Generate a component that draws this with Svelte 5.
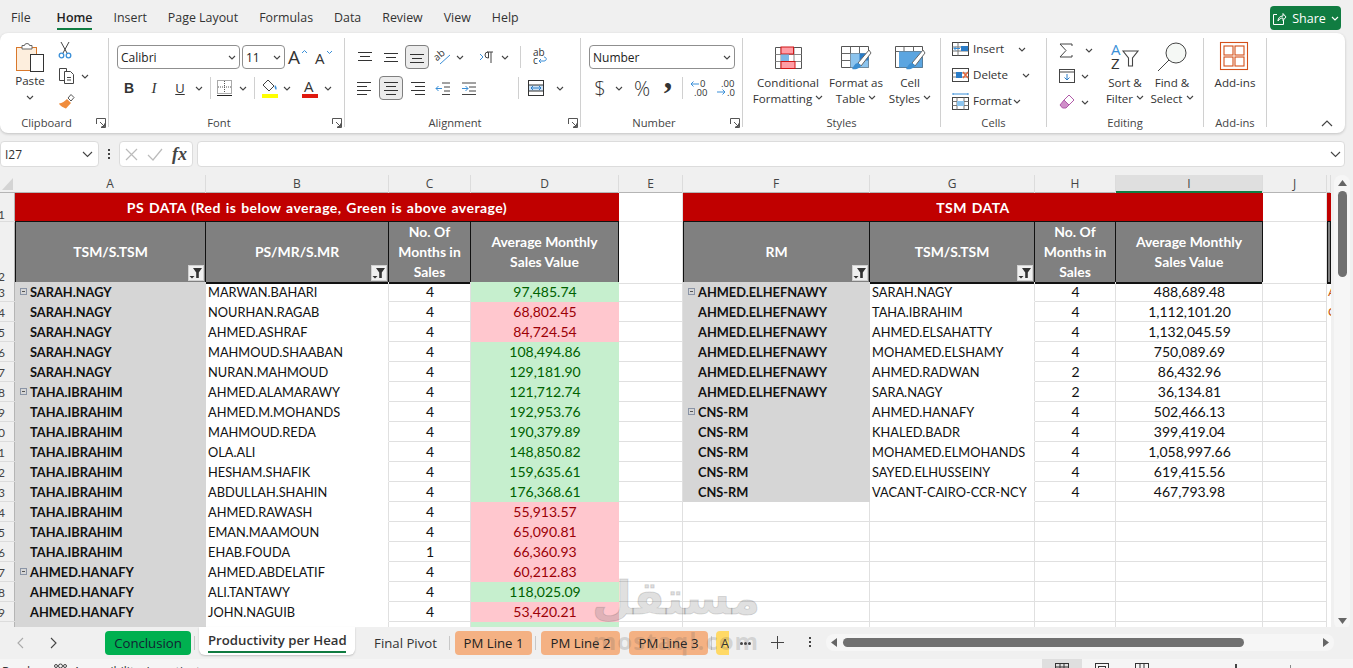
<script lang="ts">
  const MENU = ['File', 'Home', 'Insert', 'Page Layout', 'Formulas', 'Data', 'Review', 'View', 'Help']

  const COLS = ['A', 'B', 'C', 'D', 'E', 'F', 'G', 'H', 'I', 'J']

  // TSM, first in group, PS, months, value, above average
  const PS = [
    ['SARAH.NAGY', 1, 'MARWAN.BAHARI', 4, '97,485.74', 1],
    ['SARAH.NAGY', 0, 'NOURHAN.RAGAB', 4, '68,802.45', 0],
    ['SARAH.NAGY', 0, 'AHMED.ASHRAF', 4, '84,724.54', 0],
    ['SARAH.NAGY', 0, 'MAHMOUD.SHAABAN', 4, '108,494.86', 1],
    ['SARAH.NAGY', 0, 'NURAN.MAHMOUD', 4, '129,181.90', 1],
    ['TAHA.IBRAHIM', 1, 'AHMED.ALAMARAWY', 4, '121,712.74', 1],
    ['TAHA.IBRAHIM', 0, 'AHMED.M.MOHANDS', 4, '192,953.76', 1],
    ['TAHA.IBRAHIM', 0, 'MAHMOUD.REDA', 4, '190,379.89', 1],
    ['TAHA.IBRAHIM', 0, 'OLA.ALI', 4, '148,850.82', 1],
    ['TAHA.IBRAHIM', 0, 'HESHAM.SHAFIK', 4, '159,635.61', 1],
    ['TAHA.IBRAHIM', 0, 'ABDULLAH.SHAHIN', 4, '176,368.61', 1],
    ['TAHA.IBRAHIM', 0, 'AHMED.RAWASH', 4, '55,913.57', 0],
    ['TAHA.IBRAHIM', 0, 'EMAN.MAAMOUN', 4, '65,090.81', 0],
    ['TAHA.IBRAHIM', 0, 'EHAB.FOUDA', 1, '66,360.93', 0],
    ['AHMED.HANAFY', 1, 'AHMED.ABDELATIF', 4, '60,212.83', 0],
    ['AHMED.HANAFY', 0, 'ALI.TANTAWY', 4, '118,025.09', 1],
    ['AHMED.HANAFY', 0, 'JOHN.NAGUIB', 4, '53,420.21', 0],
    ['AHMED.HANAFY', 0, '', '', '', 1],
  ]

  const TSM = [
    ['AHMED.ELHEFNAWY', 1, 'SARAH.NAGY', 4, '488,689.48'],
    ['AHMED.ELHEFNAWY', 0, 'TAHA.IBRAHIM', 4, '1,112,101.20'],
    ['AHMED.ELHEFNAWY', 0, 'AHMED.ELSAHATTY', 4, '1,132,045.59'],
    ['AHMED.ELHEFNAWY', 0, 'MOHAMED.ELSHAMY', 4, '750,089.69'],
    ['AHMED.ELHEFNAWY', 0, 'AHMED.RADWAN', 2, '86,432.96'],
    ['AHMED.ELHEFNAWY', 0, 'SARA.NAGY', 2, '36,134.81'],
    ['CNS-RM', 1, 'AHMED.HANAFY', 4, '502,466.13'],
    ['CNS-RM', 0, 'KHALED.BADR', 4, '399,419.04'],
    ['CNS-RM', 0, 'MOHAMED.ELMOHANDS', 4, '1,058,997.66'],
    ['CNS-RM', 0, 'SAYED.ELHUSSEINY', 4, '619,415.56'],
    ['CNS-RM', 0, 'VACANT-CAIRO-CCR-NCY', 4, '467,793.98'],
  ]
</script>

{#snippet chev()}
  <svg class="chev" width="8" height="5" viewBox="0 0 8 5" fill="none" stroke="#444" stroke-width="1.1"><path d="M1 1l3 3 3-3"/></svg>
{/snippet}

{#snippet launcher()}
  <svg class="launcher" width="10" height="10" viewBox="0 0 10 10" fill="none" stroke="#555"><path d="M.5 6V.5h9v9H5M4 4l4.5 4.5M8.5 5.5v3h-3"/></svg>
{/snippet}

{#snippet filter()}
  <span class="filter">
    <svg width="14" height="14" viewBox="0 0 14 14"><path d="M4 2h9L9.8 6.5V12H7.2V6.5z" fill="#333"/><path d="M.5 10h5L3 12.5z" fill="#333"/></svg>
  </span>
{/snippet}

{#snippet lines(kind)}
  <svg width="18" height="14" viewBox="0 0 18 14" stroke="#333" stroke-width="1">
    {#if kind === 'left'}<path d="M1 1.500h14M1 5.500h10M1 9.500h14M1 13.500h10"/>
    {:else if kind === 'center'}<path d="M2 1.500h14M4 5.500h10M2 9.500h14M4 13.500h10"/>
    {:else}<path d="M3 1.500h14M7 5.500h10M3 9.500h14M7 13.500h10"/>{/if}
  </svg>
{/snippet}

<div class="app">
  <header class="titlebar">
    <nav class="menu">
      {#each MENU as m}
        <span class="menu-item {m === 'Home' ? 'current' : ''}">{m}</span>
      {/each}
    </nav>
    <button class="share">
      <svg width="15" height="15" viewBox="0 0 15 15" fill="none" stroke="#fff" stroke-width="1"><path d="M5 3.500H1.500v10h10V9M6 10c0-3 2-5 5-5V2.500L14 6l-3 3.500V7C9 7 7 8 6 10z"/></svg>
      <span>Share</span>
      <svg width="8" height="5" viewBox="0 0 8 5" fill="none" stroke="#fff" stroke-width="1.1"><path d="M1 1l3 3 3-3"/></svg>
    </button>
  </header>

  <section class="ribbon">
    <!-- Clipboard -->
    <div class="group clip ln">
      <div class="body clip-body">
        <div class="paste">
          <svg width="30" height="32" viewBox="0 0 30 32">
            <rect x="1.500" y="6.500" width="20" height="23" fill="#fdeedd" stroke="#d9782b"/>
            <path d="M7 8V4.500h2.500a2.500 2 0 0 1 5 0H17V8z" fill="#fff" stroke="#666"/>
            <rect x="15.500" y="13.500" width="13" height="17" fill="#fff" stroke="#333"/>
          </svg>
          <span class="lbl">Paste</span>
          {@render chev()}
        </div>
        <div class="clip-col">
          <svg width="14" height="18" viewBox="0 0 14 18" fill="none" stroke="#444"><path d="M3 1l6 11M11 1L5 12"/><circle cx="3.500" cy="14.500" r="2.300" stroke="#3a8fd8" stroke-width="1.300"/><circle cx="10.500" cy="14.500" r="2.300" stroke="#3a8fd8" stroke-width="1.300"/></svg>
          <span class="copy">
            <svg width="17" height="18" viewBox="0 0 17 18" fill="none" stroke="#444"><path d="M6 13.500H1.500v-12h7V4"/><path d="M6.500 4.500h6l3 3v9h-9zM9 10.500h4M9 13h4"/></svg>
            {@render chev()}
          </span>
          <svg width="18" height="17" viewBox="0 0 18 17"><path d="M9 6l4 4-5 5.500C6 15 2 13 1 10.500 4 10.500 7 8 9 6z" fill="#f08c3c"/><path d="M10 5l3-3.500 3 3L13 8z" fill="#fff" stroke="#555"/></svg>
        </div>
      </div>
      <span class="g-label">Clipboard</span>
      {@render launcher()}
    </div>

    <!-- Font -->
    <div class="group font ln">
      <div class="row r1">
        <span class="combo w123">Calibri{@render chev()}</span>
        <span class="combo w43">11{@render chev()}</span>
        <span class="ib w26"><svg width="20" height="18" viewBox="0 0 20 18"><text x="0" y="16" class="t-a lg">A</text><path d="M14 5l2.500-2.500L19 5" fill="none" stroke="#3a8fd8"/></svg></span>
        <span class="ib w26"><svg width="18" height="16" viewBox="0 0 18 16"><text x="0" y="15" class="t-a">A</text><path d="M12 2l2.500 2.500L17 2" fill="none" stroke="#3a8fd8"/></svg></span>
      </div>
      <div class="row r2">
        <span class="ib w24 bold">B</span>
        <span class="ib w26 ital">I</span>
        <span class="ib w26 under">U</span>
        <span class="ib w12">{@render chev()}</span>
        <i class="sep s5"></i>
        <span class="ib w20"><svg width="16" height="16" viewBox="0 0 16 16" fill="none" stroke="#555" stroke-dasharray="1 1"><rect x=".5" y=".5" width="14" height="13"/><path d="M7.500 1v12M1 7h13"/><path d="M0 15.500h15" stroke="#222" stroke-dasharray="none"/></svg></span>
        <span class="ib w16">{@render chev()}</span>
        <i class="sep s3"></i>
        <span class="ib w24"><svg width="18" height="19" viewBox="0 0 18 19"><path d="M7 1l6 6-5 5-6-6z" fill="#fff" stroke="#444"/><path d="M14 6c2 2 2 4 1 5-1-1-2-3-1-5z" fill="#3a8fd8"/><rect x="1" y="15" width="16" height="4" fill="#ffff00"/></svg></span>
        <span class="ib w10">{@render chev()}</span>
        <span class="ib w28 ml4"><svg width="18" height="19" viewBox="0 0 18 19"><text x="3" y="13" class="t-a">A</text><rect x="1" y="15" width="16" height="4" fill="#e0190f"/></svg></span>
        <span class="ib w8">{@render chev()}</span>
      </div>
      <span class="g-label">Font</span>
      {@render launcher()}
    </div>

    <!-- Alignment -->
    <div class="group align ln">
      <div class="row r1">
        <span class="ib w26"><svg width="16" height="12" viewBox="0 0 16 12" stroke="#333"><path d="M1 1.500h14M3 5.500h10M1 9.500h14"/></svg></span>
        <span class="ib w26"><svg width="16" height="12" viewBox="0 0 16 12" stroke="#333"><path d="M1 2.500h14M3 6.500h10M1 10.500h14"/></svg></span>
        <span class="ib w24 sel"><svg width="16" height="12" viewBox="0 0 16 12" stroke="#333"><path d="M1 3.500h14M3 7.500h10M1 11.500h14"/></svg></span>
        <span class="ib w26"><svg width="18" height="18" viewBox="0 0 18 18"><text x="0" y="10" class="t-s" transform="rotate(-40 6 8)">ab</text><path d="M6 16l10-9" stroke="#3a8fd8" fill="none"/></svg></span>
        <span class="ib w8">{@render chev()}</span>
        <span class="ib w26 ml10"><svg width="16" height="13" viewBox="0 0 16 13" fill="none"><path d="M1 3l3 3-3 3" stroke="#3a8fd8"/><path d="M8 1h6M12 1v11M9.500 1v6H9a3 3 0 0 1 0-6" stroke="#444"/></svg></span>
        <span class="ib w10">{@render chev()}</span>
        <i class="sep s10"></i>
        <span class="ib w38"><svg width="16" height="16" viewBox="0 0 16 16"><text x="1" y="7" class="t-s">ab</text><text x="1" y="15" class="t-s">c</text><path d="M7 12h5c3 0 3-4 0-4M7 12l2-2M7 12l2 2" fill="none" stroke="#3a8fd8"/></svg></span>
      </div>
      <div class="row r2">
        <span class="ib w26">{@render lines('left')}</span>
        <span class="ib w24 sel">{@render lines('center')}</span>
        <span class="ib w26">{@render lines('right')}</span>
        <span class="ib w26"><svg width="16" height="13" viewBox="0 0 16 13" fill="none"><path d="M7 1h8M9 5h6M9 9h6M7 12.500h8" stroke="#444"/><path d="M7 6.500H1M3.500 4L1 6.500 3.500 9" stroke="#3a8fd8"/></svg></span>
        <span class="ib w26"><svg width="16" height="13" viewBox="0 0 16 13" fill="none"><path d="M1 1h14M8 5h7M8 9h7M1 12.500h14" stroke="#444"/><path d="M1 6.500h6M4.500 4L7 6.500 4.500 9" stroke="#3a8fd8"/></svg></span>
        <i class="sep s36"></i>
        <span class="ib w34"><svg width="16" height="16" viewBox="0 0 16 16" fill="none"><rect x=".5" y=".5" width="15" height="15" stroke="#333"/><rect x="1" y="5" width="14" height="6" fill="#cfe4f7"/><path d="M3 8h10M5 6L3 8l2 2M11 6l2 2-2 2" stroke="#2a7cc7"/><path d="M.5 5h15M.5 11h15" stroke="#333"/></svg></span>
        <span class="ib w14">{@render chev()}</span>
      </div>
      <span class="g-label">Alignment</span>
      {@render launcher()}
    </div>

    <!-- Number -->
    <div class="group number ln">
      <div class="row r1">
        <span class="combo w146">Number{@render chev()}</span>
      </div>
      <div class="row r2">
        <span class="ib w22 sym">$</span>
        <span class="ib w16">{@render chev()}</span>
        <span class="ib w30 sym">%</span>
        <span class="ib w22 comma">,</span>
        <i class="sep s3"></i>
        <span class="ib w28"><svg width="20" height="18" viewBox="0 0 20 18"><text x="10" y="8" class="t-d">0</text><text x="4" y="17" class="t-d">.00</text><path d="M9 5H1M3.500 2.500L1 5l2.500 2.500" fill="none" stroke="#3a8fd8"/></svg></span>
        <span class="ib w24"><svg width="20" height="18" viewBox="0 0 20 18"><text x="5" y="8" class="t-d">.00</text><text x="11" y="17" class="t-d">.0</text><path d="M1 13h8M6.500 10.500L9 13l-2.500 2.500" fill="none" stroke="#3a8fd8"/></svg></span>
      </div>
      <span class="g-label">Number</span>
      {@render launcher()}
    </div>

    <!-- Styles -->
    <div class="group styles">
      <div class="big-row">
        <div class="big w90">
          <svg width="30" height="30" viewBox="0 0 30 30" fill="none">
            <path d="M2.500 5.500h26v21h-26z" stroke="#555"/><path d="M8 5.500v21M21 5.500v21M2.500 12.500h26M2.500 19.500h26" stroke="#888"/>
            <rect x="8" y="5" width="12.500" height="7" fill="#ff9da5" stroke="#d01616"/>
            <rect x="8" y="12.500" width="8" height="7" fill="#7db8e6"/>
            <rect x="8" y="19.500" width="14" height="7" fill="#ff9da5" stroke="#d01616"/>
          </svg>
          <span class="lbl">Conditional</span>
          <span class="lbl">Formatting {@render chev()}</span>
        </div>
        <div class="big w46">
          <svg width="32" height="30" viewBox="0 0 32 30" fill="none">
            <path d="M1.500 4.500h27v21h-27z" stroke="#555"/><path d="M1.500 11.500h27M1.500 18.500h27M10.500 4.500v21M19.500 4.500v21" stroke="#666"/>
            <rect x="10.500" y="11.500" width="18" height="14" fill="#8cc4ee"/><rect x="19.500" y="11.500" width="9" height="7" fill="#2a7cc7"/>
            <path d="M29 8L18 21l3 3L31 11z" fill="#fff" stroke="#666"/><path d="M18 21c-3 0-4 3-6 6 4 1 9-1 9-4z" fill="#3d8fd1"/>
          </svg>
          <span class="lbl">Format as</span>
          <span class="lbl">Table {@render chev()}</span>
        </div>
        <div class="big w62">
          <svg width="32" height="30" viewBox="0 0 32 30" fill="none">
            <path d="M1.500 4.500h27v21h-27z" stroke="#555"/><path d="M1.500 9.500h27M10 4.500v5M19.500 4.500v5" stroke="#666"/>
            <rect x="5" y="9.500" width="23.500" height="16" fill="#5ba5e0"/>
            <path d="M29 8L18 21l3 3L31 11z" fill="#fff" stroke="#666"/><path d="M18 21c-3 0-4 3-6 6 4 1 9-1 9-4z" fill="#3d8fd1"/>
          </svg>
          <span class="lbl">Cell</span>
          <span class="lbl">Styles {@render chev()}</span>
        </div>
      </div>
      <span class="g-label">Styles</span>
    </div>

    <!-- Cells -->
    <div class="group cells">
      <div class="cell-row">
        <svg width="17" height="14" viewBox="0 0 17 14" fill="none"><rect x=".5" y=".5" width="16" height="13" stroke="#444"/><path d="M.5 5h16M.5 9h16M6 .5v13" stroke="#777"/><rect x="9" y="4" width="7" height="5" fill="#2a7cc7"/><path d="M8 6.500H2M4 4.500l-2 2 2 2" stroke="#3a8fd8"/></svg>
        <span class="lbl l45">Insert</span>{@render chev()}
      </div>
      <div class="cell-row">
        <svg width="17" height="14" viewBox="0 0 17 14" fill="none"><rect x=".5" y=".5" width="16" height="13" stroke="#444"/><path d="M.5 5h16M.5 9h16" stroke="#777"/><rect x="4" y="4" width="6" height="6" fill="#2a7cc7"/><path d="M11 4l5 6M16 4l-5 6" stroke="#e8663a" stroke-width="1.300"/></svg>
        <span class="lbl l49">Delete</span>{@render chev()}
      </div>
      <div class="cell-row">
        <svg width="17" height="17" viewBox="0 0 17 17" fill="none"><path d="M1 1h15M1 0v2M16 0v2" stroke="#3a8fd8"/><rect x=".5" y="4.500" width="16" height="12" stroke="#444"/><path d="M.5 8.500h16M.5 12.500h16M5 4.500v12M12 4.500v12" stroke="#777"/><rect x="5" y="8" width="7" height="5" fill="#8cc4ee"/></svg>
        <span class="lbl l40">Format</span>{@render chev()}
      </div>
      <span class="g-label">Cells</span>
    </div>

    <!-- Editing -->
    <div class="group editing">
      <div class="big-row">
        <div class="edit-col">
          <div class="edit-row"><svg width="14" height="15" viewBox="0 0 14 15" fill="none" stroke="#444"><path d="M13 3V1H1l6 6.500L1 14h12v-2"/></svg><span class="gap-sig">{@render chev()}</span></div>
          <div class="edit-row"><svg width="16" height="14" viewBox="0 0 16 14" fill="none"><rect x=".5" y=".5" width="15" height="13" stroke="#444"/><path d="M.5 3h15" stroke="#444"/><path d="M8 5v6M5.500 8.500L8 11l2.500-2.500" stroke="#2a7cc7"/></svg><span class="gap-fill">{@render chev()}</span></div>
          <div class="edit-row"><svg width="16" height="16" viewBox="0 0 16 16"><path d="M10 1l5 5-5 5-5-5z" fill="#fff" stroke="#b05aa8"/><path d="M5 6l5 5-3 3H3.500L1 11z" fill="#cf8fc9" stroke="#b05aa8"/></svg><span class="gap-fill">{@render chev()}</span></div>
        </div>
        <div class="big w46 tall">
          <svg width="30" height="30" viewBox="0 0 30 30" fill="none"><text x="1" y="13" class="t-sort blue">A</text><text x="1" y="27" class="t-sort">Z</text><path d="M13 9h15l-5.500 7v8h-4v-8z" stroke="#444" stroke-width="1.100"/></svg>
          <span class="lbl">Sort &amp;</span>
          <span class="lbl">Filter {@render chev()}</span>
        </div>
        <div class="big w48 tall">
          <svg width="30" height="30" viewBox="0 0 30 30" fill="none" stroke="#444"><circle cx="19" cy="11" r="10" fill="#f5f8f5"/><path d="M12 18L1 29"/></svg>
          <span class="lbl">Find &amp;</span>
          <span class="lbl">Select {@render chev()}</span>
        </div>
      </div>
      <span class="g-label">Editing</span>
    </div>

    <!-- Add-ins -->
    <div class="group addins">
      <div class="big tall">
        <svg width="30" height="30" viewBox="0 0 30 30" fill="none" stroke="#d4501a" stroke-width="1.100"><rect x=".5" y=".5" width="27" height="27"/><rect x="4" y="4" width="9" height="9"/><rect x="15" y="4" width="9" height="9"/><rect x="4" y="15" width="9" height="9"/><rect x="15" y="15" width="9" height="9"/></svg>
        <span class="lbl">Add-ins</span>
      </div>
      <span class="g-label">Add-ins</span>
    </div>

    <svg class="collapse" width="12" height="7" viewBox="0 0 12 7" fill="none" stroke="#444" stroke-width="1.200"><path d="M1 6l5-5 5 5"/></svg>
  </section>

  <section class="formula">
    <div class="namebox"><span>I27</span><svg width="11" height="6" viewBox="0 0 11 6" fill="none" stroke="#444" stroke-width="1.100"><path d="M1 1l4.500 4.500L10 1"/></svg></div>
    <span class="dots"><i></i><i></i><i></i></span>
    <div class="fx-box">
      <svg width="13" height="13" viewBox="0 0 13 13" fill="none" stroke="#bbb" stroke-width="1.200"><path d="M1 1l11 11M12 1L1 12"/></svg>
      <svg width="16" height="13" viewBox="0 0 16 13" fill="none" stroke="#bbb" stroke-width="1.200"><path d="M1 7l5 5L15 1"/></svg>
      <span class="fx">fx</span>
    </div>
    <div class="fx-input"><svg width="11" height="6" viewBox="0 0 11 6" fill="none" stroke="#444" stroke-width="1.100"><path d="M1 1l4.500 4.500L10 1"/></svg></div>
  </section>

  <section class="sheet">
    <div class="grid">
      <div class="row-g colhead">
        <span class="corner"><svg width="11" height="12" viewBox="0 0 11 12"><path d="M11 0v12H0z" fill="#d4d4d4"/></svg></span>
        {#each COLS as c}
          <span class="ch {c === 'I' ? 'cur' : ''}">{c}</span>
        {/each}
        <span class="ch"></span>
      </div>

      <!-- row 1 -->
      <div class="row-g h1">
        <span class="rn">1</span>
        <div class="banner s4">PS DATA (Red is below average, Green is above average)</div>
        <div class="blank"></div>
        <div class="banner s4">TSM DATA</div>
        <div class="blank"></div>
        <div class="banner"></div>
      </div>

      <!-- row 2 -->
      <div class="row-g h2">
        <span class="rn">2</span>
        <div class="hd first">TSM/S.TSM{@render filter()}</div>
        <div class="hd">PS/MR/S.MR{@render filter()}</div>
        <div class="hd">No. Of<br />Months in<br />Sales</div>
        <div class="hd">Average Monthly<br />Sales Value</div>
        <div class="blank"></div>
        <div class="hd first">RM{@render filter()}</div>
        <div class="hd">TSM/S.TSM{@render filter()}</div>
        <div class="hd">No. Of<br />Months in<br />Sales</div>
        <div class="hd">Average Monthly<br />Sales Value</div>
        <div class="blank"></div>
        <div class="hd first"></div>
      </div>

      {#each PS as p, i}
        {@const t = TSM[i]}
        <div class="row-g data">
          <span class="rn mid">{i + 3}</span>
          <div class="c grey">{#if p[1]}<span class="out"></span>{/if}{p[0]}</div>
          <div class="c plain">{p[2]}</div>
          <div class="c ctr">{p[3]}</div>
          <div class="c ctr {p[5] ? 'good' : 'bad'}">{p[4]}</div>
          <div class="c"></div>
          {#if t}
            <div class="c grey">{#if t[1]}<span class="out"></span>{/if}{t[0]}</div>
            <div class="c plain">{t[2]}</div>
            <div class="c ctr">{t[3]}</div>
            <div class="c ctr">{t[4]}</div>
          {:else}
            <div class="c"></div><div class="c"></div><div class="c"></div><div class="c"></div>
          {/if}
          <div class="c"></div>
          <div class="c k">{i === 0 ? 'A' : i === 1 ? 'C' : ''}</div>
        </div>
      {/each}
    </div>

    <div class="vscroll">
      <svg width="9" height="6" viewBox="0 0 9 6"><path d="M4.500 0L9 6H0z" fill="#666"/></svg>
      <span class="vthumb"></span>
      <svg class="vdown" width="9" height="6" viewBox="0 0 9 6"><path d="M4.500 6L9 0H0z" fill="#666"/></svg>
    </div>
  </section>

  <section class="tabs">
    <svg class="nav first" width="7" height="12" viewBox="0 0 7 12" fill="none" stroke="#aaa" stroke-width="1.100"><path d="M6 1L1 6l5 5"/></svg>
    <svg class="nav" width="7" height="12" viewBox="0 0 7 12" fill="none" stroke="#444" stroke-width="1.100"><path d="M1 1l5 5-5 5"/></svg>
    <span class="tab green">Conclusion</span>
    <i class="tsep"></i>
    <span class="tab tab-on"><b>Productivity per Head</b></span>
    <span class="tab plain-tab">Final Pivot</span>
    <i class="tsep"></i>
    <span class="tab peach t77">PM Line 1</span>
    <i class="tsep"></i>
    <span class="tab peach t79">PM Line 2</span>
    <span class="tab peach t79 ml9">PM Line 3</span>
    <i class="tsep"></i>
    <span class="tab yellow">A</span>
    <span class="more"><i></i><i></i><i></i></span>
    <svg class="plus" width="13" height="13" viewBox="0 0 13 13" stroke="#444"><path d="M6.500 0v13M0 6.500h13"/></svg>
    <span class="dots v"><i></i><i></i><i></i></span>
    <div class="hscroll">
      <svg width="6" height="9" viewBox="0 0 6 9"><path d="M0 4.500L6 0v9z" fill="#666"/></svg>
      <span class="hthumb"></span>
      <svg class="hright" width="6" height="9" viewBox="0 0 6 9"><path d="M6 4.500L0 0v9z" fill="#666"/></svg>
    </div>
  </section>

  <footer class="status">
    <span>Ready</span>
    <svg width="13" height="12" viewBox="0 0 13 12" fill="none" stroke="#444"><circle cx="6.500" cy="3" r="2"/><circle cx="2" cy="3" r="1.500"/><circle cx="11" cy="3" r="1.500"/></svg>
    <span>Accessibility: Investigate</span>
    <span class="views">
      <span class="view on"><svg width="14" height="12" viewBox="0 0 14 12" fill="none" stroke="#333"><rect x=".5" y=".5" width="13" height="11"/><path d="M5 .5v11M9 .5v11M.5 4h13"/></svg></span>
      <span class="view"><svg width="14" height="12" viewBox="0 0 14 12" fill="none" stroke="#333"><rect x=".5" y=".5" width="13" height="11"/><rect x="3.500" y="3.500" width="7" height="8"/></svg></span>
      <span class="view"><svg width="14" height="12" viewBox="0 0 14 12" fill="none" stroke="#333"><rect x=".5" y=".5" width="13" height="11"/><path d="M5 .5v11M9 .5v11"/></svg></span>
    </span>
    <span class="zoomer"><i class="knob"></i><i class="tick"></i><span>100%</span></span>
  </footer>

  <div class="watermark" aria-hidden="true">
    <span class="wm-ar">مستقل</span>
    <span class="wm-en">mostaql.com</span>
  </div>
</div>

<style>
  :global(body) {
    margin: 0;
    overflow: hidden;
    background: #f0f0f0;
  }
  .app {
    position: relative;
    width: 1353px;
    height: 668px;
    overflow: hidden;
    background: #f0f0f0;
    font-family: "Open Sans", "Noto Sans", sans-serif;
    font-size: 12px;
    color: #333;
  }
  svg { display: block; flex-shrink: 0; overflow: visible; }
  i { display: block; }

  /* Title bar */
  .titlebar {
    height: 33px;
    display: flex;
    align-items: flex-start;
    justify-content: space-between;
    padding: 0 12px 0 11px;
    box-sizing: border-box;
  }
  .menu { display: flex; gap: 21px; }
  .menu-item {
    font-size: 12.4px;
    line-height: 36px;
    height: 30px;
    color: #333;
    white-space: nowrap;
  }
  .menu-item:first-child { margin-right: 5px; }
  .menu-item.current {
    font-weight: 600;
    color: #222;
    box-shadow: inset 0 -2px 0 #107c41;
  }
  .share {
    width: 71px;
    height: 24px;
    margin-top: 6px;
    border: 0;
    border-radius: 4px;
    background: #107c41;
    color: #fff;
    display: flex;
    align-items: center;
    justify-content: center;
    gap: 5px;
    padding: 0;
    font: 12.5px "Open Sans", sans-serif;
  }

  /* Ribbon */
  .ribbon {
    position: relative;
    width: 1345px;
    height: 100px;
    box-sizing: border-box;
    padding: 5px 0 6px;
    background: #fff;
    border-radius: 8px;
    box-shadow: 0 1px 3px rgba(0,0,0,0.2);
    display: flex;
  }
  .group {
    position: relative;
    height: 89px;
    box-sizing: border-box;
    border-right: 1px solid #d0d0d0;
    display: flex;
    flex-direction: column;
    flex-shrink: 0;
  }
  .clip { width: 109px; }
  .font { width: 236px; }
  .align { width: 236px; }
  .number { width: 162px; }
  .styles { width: 198px; }
  .cells { width: 106px; }
  .editing { width: 157px; }
  .addins { width: 63px; align-items: center; }

  .g-label {
    position: absolute;
    left: 0;
    right: 0;
    bottom: -4px;
    text-align: center;
    font-size: 11.2px;
    line-height: 16px;
    color: #444;
  }
  .ln .g-label { padding-right: 15px; }
  .launcher { position: absolute; right: 2px; bottom: -1px; }
  .lbl {
    font-size: 11.6px;
    line-height: 16px;
    white-space: nowrap;
    color: #333;
    display: inline-flex;
    align-items: center;
    gap: 0;
  }

  .row { display: flex; align-items: center; height: 24px; padding-left: 8px; }
  .r1 { margin-top: 7px; }
  .r2 { margin-top: 7px; }
  .align .row { padding-left: 7px; }

  .combo {
    box-sizing: border-box;
    height: 24px;
    border: 1px solid #8f8f8f;
    border-radius: 4px;
    display: flex;
    align-items: center;
    justify-content: space-between;
    padding: 0 3px 0 3px;
    font-size: 12px;
    color: #222;
  }
  .w123 { width: 123px; margin-right: 2px; }
  .w43 { width: 43px; }
  .w146 { width: 146px; }

  .ib {
    height: 24px;
    display: flex;
    align-items: center;
    justify-content: center;
    flex-shrink: 0;
    box-sizing: border-box;
  }
  .w8 { width: 8px; } .w10 { width: 10px; } .w12 { width: 12px; } .w14 { width: 14px; }
  .w16 { width: 16px; } .w20 { width: 20px; } .w22 { width: 22px; } .w24 { width: 24px; }
  .w26 { width: 26px; } .w28 { width: 28px; } .w30 { width: 30px; } .w34 { width: 34px; }
  .w38 { width: 38px; }
  .ml4 { margin-left: 4px; } .ml10 { margin-left: 10px; }
  .sel {
    margin: 0 1px;
    background: #ececec;
    border: 1px solid #7f7f7f;
    border-radius: 4px;
  }
  .sep { width: 1px; height: 22px; background: #d0d0d0; flex-shrink: 0; }
  .s3 { margin: 0 3px; } .s5 { margin: 0 4px 0 5px; }
  .s10 { margin-left: 10px; } .s36 { margin-left: 36px; }

  .bold { font: bold 14px "Liberation Sans", sans-serif; }
  .ital { font: italic 15px "Liberation Serif", serif; }
  .under { font: 13px "Open Sans", sans-serif; text-decoration: underline; }
  .sym { font: 300 20px "Open Sans", sans-serif; }
  .comma { font: bold 34px/14px "Liberation Serif", serif; padding-bottom: 22px; }

  .t-a { font: 15px "Open Sans", sans-serif; fill: #333; }
  .t-a.lg { font-size: 19px; }
  .t-s { font: 10px "Open Sans", sans-serif; fill: #333; }
  .t-d { font: 9.5px "Open Sans", sans-serif; fill: #333; }
  .t-sort { font: 15px "Open Sans", sans-serif; fill: #333; }
  .t-sort.blue { fill: #3a8fd8; }

  /* Clipboard */
  .clip-body { display: flex; padding-top: 3px; }
  .paste {
    width: 60px;
    display: flex;
    flex-direction: column;
    align-items: center;
  }
  .paste .chev { margin-top: 6px; }
  .clip-col {
    width: 38px;
    margin-left: -4px;
    display: flex;
    flex-direction: column;
    gap: 8px;
    align-items: flex-start;
    padding-left: 2px;
  }
  .copy { display: flex; align-items: center; gap: 6px; }

  /* Big buttons */
  .big-row { display: flex; }
  .big {
    display: flex;
    flex-direction: column;
    align-items: center;
    padding-top: 4px;
    box-sizing: border-box;
    flex-shrink: 0;
  }
  .big svg:first-child { margin-bottom: 3px; }
  .big .chev { margin-left: 3px; }
  .w90 { width: 90px; }
  .w46 { width: 46px; }
  .w48 { width: 48px; }
  .w62 { width: 62px; }

  /* Cells */
  .cell-row {
    height: 26px;
    display: flex;
    align-items: center;
    padding-left: 11px;
  }
  .cell-row:first-child { margin-top: -2px; }
  .cell-row .lbl { margin-left: 4px; }
  .l45 { width: 45px; } .l49 { width: 49px; } .l40 { width: 40px; }

  /* Editing */
  .edit-col { width: 55px; padding-left: 12px; box-sizing: border-box; margin-top: -1px; }
  .edit-row { height: 26px; display: flex; align-items: center; }
  .gap-sig { margin-left: 12px; }
  .gap-fill { margin-left: 6px; }

  .collapse { position: absolute; left: 1321px; bottom: 6px; }

  /* Formula bar */
  .formula {
    display: flex;
    align-items: center;
    height: 26px;
    margin-top: 8px;
    width: 1345px;
  }
  .namebox, .fx-box, .fx-input {
    height: 26px;
    box-sizing: border-box;
    background: #fff;
    border: 1px solid #dcdcdc;
    border-radius: 4px;
    display: flex;
    align-items: center;
  }
  .namebox {
    width: 99px;
    justify-content: space-between;
    padding: 0 5px 0 4px;
    font-size: 12px;
  }
  .dots { width: 20px; display: flex; flex-direction: column; align-items: center; gap: 2px; }
  .dots i { width: 2px; height: 2px; background: #444; }
  .fx-box { width: 74px; gap: 9px; padding-left: 5px; }
  .fx { font: italic bold 18px "Liberation Serif", serif; color: #444; }
  .fx-input { flex: 1; margin-left: 4px; justify-content: flex-end; padding-right: 3px; }

  /* Sheet */
  .sheet {
    display: flex;
    height: 452px;
    margin-top: 8px;
  }
  .grid {
    width: 1331px;
    height: 452px;
    overflow: hidden;
    background: #fff;
  }
  .row-g {
    display: grid;
    grid-template-columns: 15px 191px 183px 82px 148px 64px 187px 165px 81px 147px 64px 4px;
  }
  .colhead { height: 18px; background: #f0f0f0; box-shadow: inset 0 -1px 0 #b5b5b5; }
  .corner { display: flex; align-items: center; justify-content: center; }
  .ch {
    font-size: 12px;
    line-height: 17px;
    text-align: center;
    color: #444;
    border-right: 1px solid #dcdcdc;
    box-sizing: border-box;
  }
  .ch.cur {
    background: #dfdfdf;
    box-shadow: inset 0 -2px 0 #107c41;
  }

  .rn {
    background: #f0f0f0;
    display: flex;
    justify-content: flex-end;
    align-items: flex-end;
    overflow: hidden;
    font-size: 12px;
    line-height: 15px;
    color: #444;
    padding-right: 10px;
    box-sizing: border-box;
    box-shadow: inset 0 -1px 0 #dcdcdc, inset -1px 0 0 #b5b5b5;
  }
  .rn.mid { align-items: center; }

  .h1 { height: 29px; }
  .h2 { height: 60px; }
  .data { height: 20px; }
  .h1, .h2, .data {
    font: 12.8px/20px Lato, "Liberation Sans", sans-serif;
    color: #111;
  }
  .banner {
    background: #c00000;
    color: #fff;
    font-weight: 700;
    font-size: 14px;
    letter-spacing: 0.45px;
    word-spacing: 1px;
    text-align: center;
    line-height: 29px;
    border-bottom: 1px solid #111;
    white-space: nowrap;
    overflow: hidden;
  }
  .s4 { grid-column: span 4; }
  .blank { border-bottom: 1px solid #e0e0e0; border-right: 1px solid #e0e0e0; }
  .hd {
    position: relative;
    background: #808080;
    color: #fff;
    font-weight: 700;
    font-size: 13.9px;
    text-align: center;
    display: flex;
    align-items: center;
    justify-content: center;
    box-sizing: border-box;
    border-right: 1px solid #111;
    border-bottom: 2px solid #111;
  }
  .hd.first { border-left: 1px solid #111; }
  .filter {
    position: absolute;
    right: 1px;
    bottom: 1px;
    width: 16px;
    height: 16px;
    background: #f0f0f0;
    border: 1px solid #d0d0d0;
    box-sizing: border-box;
    display: flex;
    align-items: center;
    justify-content: center;
  }

  .c {
    position: relative;
    white-space: nowrap;
    overflow: hidden;
    box-sizing: border-box;
    border-right: 1px solid #e0e0e0;
    border-bottom: 1px solid #e0e0e0;
    line-height: 20px;
  }
  .ctr { text-align: center; font-size: 14px; padding-left: 1px; }
  .grey {
    background: #d6d6d6;
    border-color: #d6d6d6;
    font-weight: 700;
    padding-left: 15px;
    border-bottom: 0;
  }
  .plain { padding-left: 2px; border-bottom-color: #fff; }
  .good { background: #c6efce; color: #006100; border-color: #c6efce; }
  .bad { background: #ffc7ce; color: #9c0006; border-color: #ffc7ce; }
  .k { border: 0; color: #c55a11; font-size: 12px; padding-left: 1px; }
  .out {
    position: absolute;
    left: 5px;
    top: 6px;
    width: 7px;
    height: 7px;
    border: 1px solid #8a94a6;
    box-sizing: border-box;
    background: linear-gradient(#555, #555) center / 3px 1px no-repeat;
  }

  .vscroll {
    width: 16px;
    height: 455px;
    margin-left: 3px;
    background: #f6f6f6;
    border-radius: 8px;
    display: flex;
    flex-direction: column;
    align-items: center;
    padding-top: 5px;
    box-sizing: border-box;
  }
  .vthumb {
    display: block;
    width: 9px;
    height: 86px;
    margin-top: 5px;
    border-radius: 5px;
    background: #707070;
  }
  .vdown { margin-top: auto; margin-bottom: 6px; }

  /* Tabs */
  .tabs {
    height: 32px;
    display: flex;
    align-items: flex-start;
    background: #f0f0f0;
    position: relative;
  }
  .nav { margin-top: 10px; }
  .nav.first { margin-left: 17px; margin-right: 26px; }
  .tab {
    box-sizing: border-box;
    height: 24px;
    margin-top: 4px;
    border-radius: 4px;
    font-size: 13.2px;
    line-height: 24px;
    text-align: center;
    white-space: nowrap;
    flex-shrink: 0;
  }
  .green { width: 86px; margin-left: 48px; background: #00b050; color: #123; }
  .tsep { width: 1px; height: 14px; margin: 9px 4px 0 3px; background: #c8c8c8; flex-shrink: 0; }
  .tab-on {
    width: 156px;
    height: 28px;
    margin-top: 0;
    padding: 0 9px;
    background: #fff;
    border-radius: 0 0 6px 6px;
    box-shadow: 0 1px 2px rgba(0,0,0,0.2);
    line-height: 26px;
  }
  .tab-on b {
    display: block;
    font-weight: 600;
    color: #333;
    border-bottom: 2px solid #107c41;
    height: 24px;
  }
  .plain-tab { width: 91px; padding-left: 10px; }
  .peach { background: #f4b183; color: #222; }
  .t77 { width: 77px; margin-left: 2px; }
  .t79 { width: 79px; }
  .ml9 { margin-left: 9px; }
  .tsep + .peach { margin-left: 1px; }
  .yellow {
    width: 13px;
    background: #ffd966;
    border-radius: 4px 0 0 4px;
    overflow: hidden;
    text-align: right;
  }
  .more { display: flex; gap: 1px; margin: 15px 0 0 11px; width: 26px; }
  .more i { width: 3px; height: 3px; border-radius: 50%; background: #444; }
  .plus { margin: 9px 0 0 5px; }
  .dots.v { width: 4px; margin: 10px 0 0 24px; }
  .hscroll {
    width: 508px;
    height: 17px;
    margin: 7px 0 0 14px;
    padding: 0 5px;
    box-sizing: border-box;
    background: #f6f6f6;
    border-radius: 8px;
    display: flex;
    align-items: center;
  }
  .hthumb {
    display: block;
    width: 401px;
    height: 9px;
    margin-left: 6px;
    border-radius: 5px;
    background: #707070;
  }
  .hright { margin-left: auto; }

  /* Status bar */
  .status {
    height: 9px;
    overflow: hidden;
    background: #f5f5f5;
    display: flex;
    align-items: flex-start;
    gap: 6px;
    padding-left: 2px;
    font-size: 12px;
    line-height: 18px;
    position: relative;
  }
  .status > span:first-child { margin-right: 12px; margin-top: 4px; }
  .status > span:nth-child(3) { margin-top: 4px; }
  .status > svg { margin-top: 4px; }
  .views { display: flex; margin-left: auto; }
  .view {
    width: 40px;
    height: 9px;
    display: flex;
    justify-content: center;
    padding-top: 4px;
    box-sizing: border-box;
  }
  .view.on { background: #dfdfdf; }
  .zoomer {
    width: 168px;
    display: flex;
    align-items: flex-start;
    margin-right: 17px;
    font-size: 11px;
  }
  .knob { width: 5px; height: 9px; margin: 5px 0 0 67px; background: #444; }
  .tick { width: 1px; height: 9px; margin: 6px 0 0 53px; background: #888; }
  .zoomer span { margin: 4px 0 0 18px; }

  /* Watermark */
  .watermark {
    position: absolute;
    left: 576px;
    top: 566px;
    width: 200px;
    display: flex;
    flex-direction: column;
    align-items: center;
    pointer-events: none;
    color: rgba(90, 90, 90, 0.2);
  }
  .wm-ar { font: bold 46px/64px "DejaVu Sans", sans-serif; -webkit-text-stroke: 1px rgba(90, 90, 90, 0.2); }
  .wm-en { font: 700 24px/22px "Open Sans", sans-serif; letter-spacing: 1px; }
</style>
